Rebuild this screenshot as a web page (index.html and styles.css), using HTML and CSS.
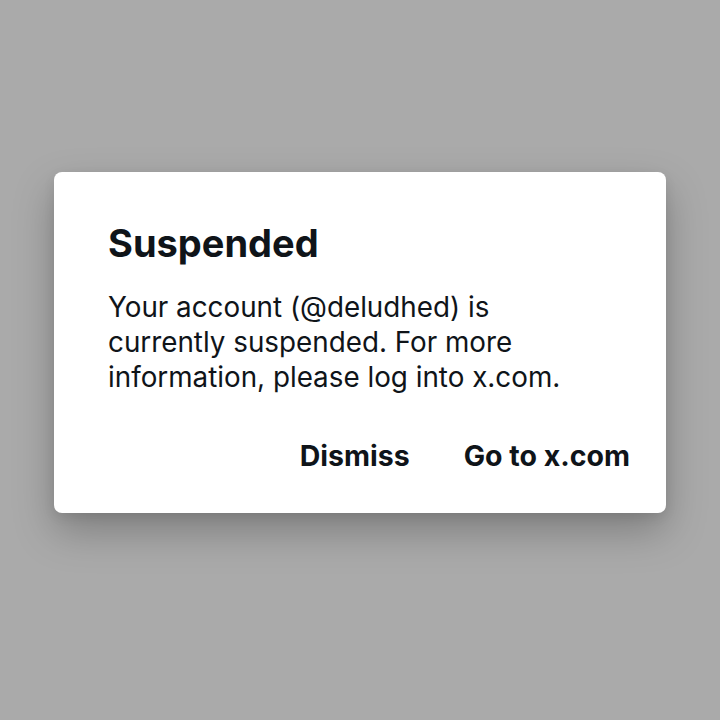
FILE: index.html
```html
<!DOCTYPE html>
<html>
<head>
  <title>Suspended</title>
  <link rel="stylesheet" href="styles.css">
</head>
<body>
  <div class="dialog">
    <h2 class="title">Suspended</h2>
    <p class="message">Your account (@deludhed) is currently suspended. For more information, please log into x.com.</p>
    <div class="actions">
      <button class="action">Dismiss</button>
      <button class="action">Go to x.com</button>
    </div>
  </div>
</body>
</html>
```

FILE: styles.css
```css
/* Estilos */
html, body {
  height: 100%;
}

body {
  margin: 0;
  background-color: #aaaaaa;
  font-family: Inter, "Noto Sans", sans-serif;
  color: #0f1419;
  display: flex;
  align-items: center;
  justify-content: center;
}

.dialog {
  width: 612px;
  height: 341px;
  box-sizing: border-box;
  margin-bottom: 35px;
  padding: 49px 36px 0 54px;
  background-color: #ffffff;
  border-radius: 8px;
  box-shadow: 0 18px 40px rgba(0, 0, 0, 0.26), 0 4px 12px rgba(0, 0, 0, 0.08);
}

.title {
  margin: 0 0 25px 0;
  font-size: 38px;
  font-weight: 700;
  line-height: 44px;
}

.message {
  margin: 0;
  width: 480px;
  font-size: 27.8px;
  line-height: 35px;
}

.actions {
  display: flex;
  justify-content: flex-end;
  gap: 54px;
  margin-top: 39px;
}

.action {
  padding: 0;
  border: none;
  background: none;
  font-family: inherit;
  font-size: 28.5px;
  font-weight: 700;
  line-height: 44px;
  color: #0f1419;
  cursor: pointer;
}
```
